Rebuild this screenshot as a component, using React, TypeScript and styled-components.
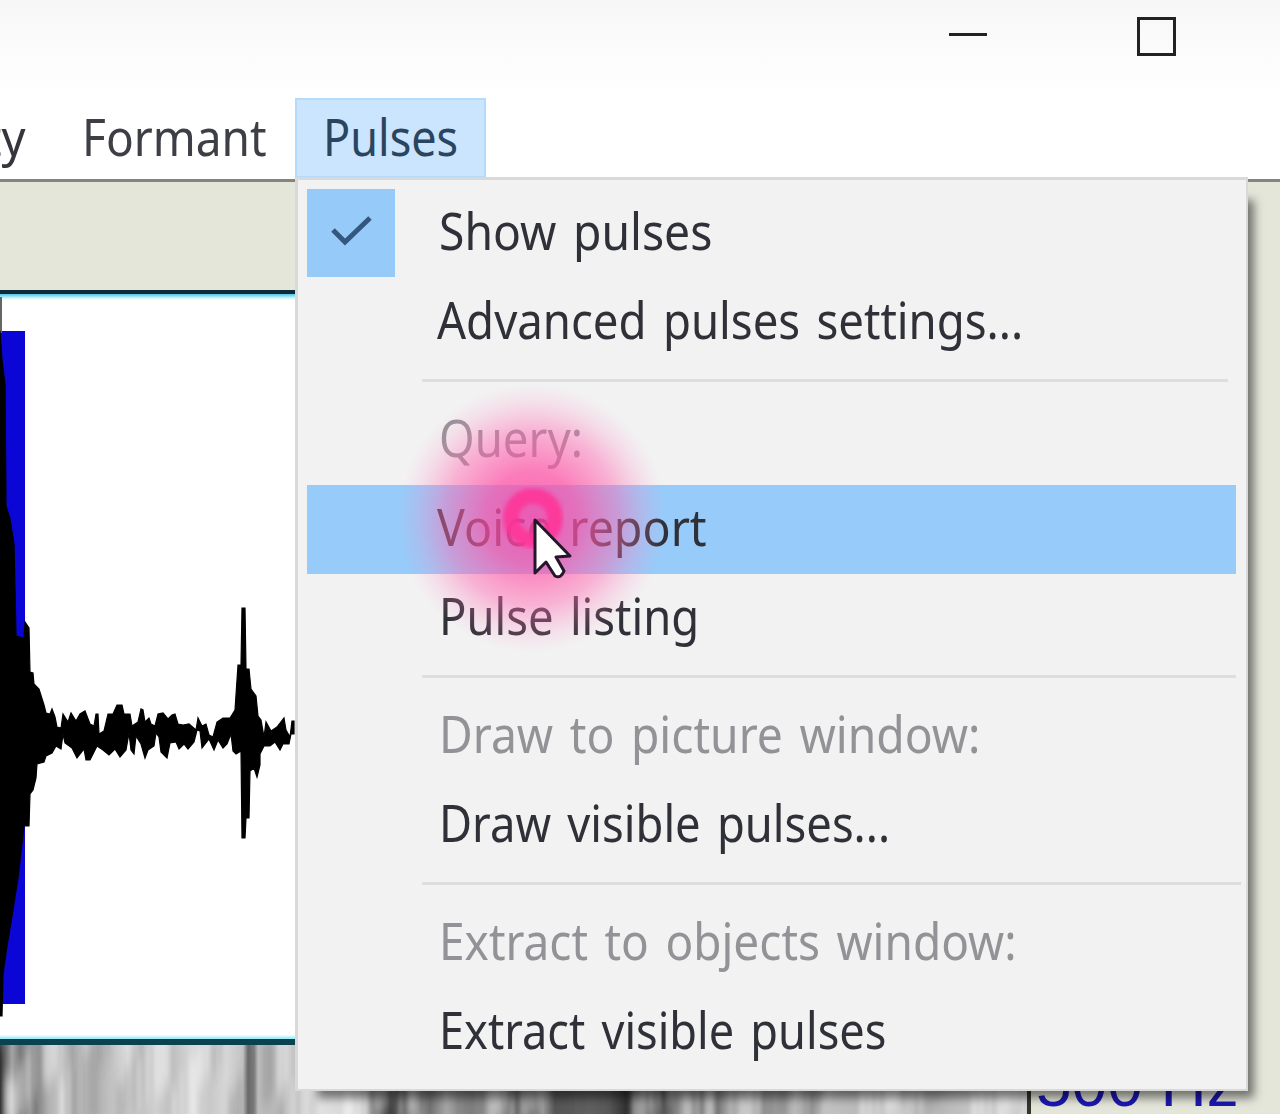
import React, { useLayoutEffect, useRef } from 'react';
import styled, { createGlobalStyle } from 'styled-components';

const GlobalStyle = createGlobalStyle`
  html,
  body {
    margin: 0;
    overflow: hidden;
  }
`;

const Window = styled.div`
  width: 1280px;
  height: 1114px;
  display: flex;
  flex-direction: column;
  overflow: hidden;
  background: #fff;
  font-family: 'Noto Sans', 'Open Sans', sans-serif;
  font-size: 51px;
  color: #34353d;
  cursor: default;
`;

const TitleBar = styled.div`
  flex: none;
  height: 98px;
  box-sizing: border-box;
  display: flex;
  justify-content: flex-end;
  gap: 149px;
  padding: 16px 103px 0 0;
  background: linear-gradient(#f7f7f7, #fcfcfc 60%, #fff);
`;

const MenuBar = styled.nav`
  flex: none;
  height: 81px;
  display: flex;
  border-bottom: 3px solid #858580;
`;

const MenuTitle = styled.div<{ $width: number; $pad: number; $open?: boolean }>`
  position: relative;
  box-sizing: border-box;
  width: ${(p) => p.$width}px;
  height: 80px;
  padding-left: ${(p) => p.$pad}px;
  line-height: 72px;
  border: 2px solid ${(p) => (p.$open ? '#b5dafa' : 'transparent')};
  background: ${(p) => (p.$open ? '#cae5fd' : 'transparent')};
  color: ${(p) => (p.$open ? '#2b4560' : '#3d3e46')};
`;

const Label = styled.span`
  display: inline-block;
  white-space: pre;
  word-spacing: 5px;
  transform-origin: 0 0;
`;

const Clipped = styled.div`
  width: 55px;
  height: 80px;
  box-sizing: border-box;
  padding-right: 29px;
  display: flex;
  justify-content: flex-end;
  overflow: hidden;
  line-height: 76px;

  ${Label} {
    transform-origin: 100% 0;
  }
`;

const Popup = styled.div`
  position: absolute;
  z-index: 2;
  top: 77px;
  left: -2px;
  width: 953px;
  height: 914px;
  box-sizing: border-box;
  padding: 9px 10px 0 9px;
  border: solid #d9d9d9;
  border-width: 3px 2px 2px 3px;
  background: #f2f2f2;
  box-shadow: 14px 15px 9px -8px rgba(0, 0, 0, 0.5);
`;

const Item = styled.div<{ $active?: boolean; $disabled?: boolean }>`
  height: 89px;
  display: flex;
  line-height: 83px;
  background: ${(p) => (p.$active ? '#97cbf9' : 'transparent')};
  color: ${(p) => (p.$disabled ? '#929297' : '#303138')};
`;

const Gutter = styled.div<{ $wide?: boolean }>`
  flex: none;
  width: ${(p) => (p.$wide ? 132 : 130)}px;
`;

const CheckBox = styled.div`
  width: 88px;
  height: 88px;
  background: #95caf9;
`;

const Separator = styled.hr<{ $end: number }>`
  height: 3px;
  margin: 12px ${(p) => p.$end}px 14px 115px;
  border: 0;
  background: #dedede;
`;

const Editor = styled.div`
  flex: 1;
  display: flex;
  background: #e5e6da;
`;

const Tracks = styled.div`
  width: 1027px;
  display: flex;
  flex-direction: column;
`;

const Ruler = styled.div`
  flex: none;
  height: 108px;
`;

const SoundPane = styled.div`
  flex: none;
  height: 755px;
  box-sizing: border-box;
  border-top: 4px solid #0d2b38;
  border-bottom: 6px solid #0b4252;
  background: linear-gradient(#55c4e2 0, #c8f6fd 4px, #fff 6px, #fff 741px, #9eeef8 744px);

  svg {
    display: block;
  }
`;

const SpectrumPane = styled.div`
  flex: 1;
  overflow: hidden;

  svg {
    display: block;
  }
`;

const Scale = styled.div`
  flex: 1;
  display: flex;
  flex-direction: column;
  justify-content: flex-end;
  overflow: hidden;
`;

const Frequency = styled.div`
  height: 78px;
  box-sizing: border-box;
  padding-left: 5px;
  border-left: 4px solid #35352c;
  font-family: 'Liberation Sans', Arial, sans-serif;
  font-size: 64px;
  line-height: 90px;
  white-space: nowrap;
  color: #1c18b4;
`;

const Highlight = styled.div`
  position: absolute;
  z-index: 3;
  left: 105px;
  top: 280px;
  width: 260px;
  height: 290px;
  pointer-events: none;
`;

// Text squeezed horizontally to the given width
const FitText: React.FC<{ width: number; children: string }> = ({ width, children }) => {
  const ref = useRef<HTMLSpanElement>(null);

  useLayoutEffect(() => {
    const el = ref.current;
    if (el) el.style.transform = `scaleX(${width / el.offsetWidth})`;
  }, [width, children]);

  return <Label ref={ref}>{children}</Label>;
};

type Entry =
  | { kind: 'item'; text: string; width: number; checked?: boolean; active?: boolean; disabled?: boolean }
  | { kind: 'separator'; end: number };

const entries: Entry[] = [
  { kind: 'item', text: 'Show pulses', width: 273, checked: true },
  { kind: 'item', text: 'Advanced pulses settings...', width: 586 },
  { kind: 'separator', end: 8 },
  { kind: 'item', text: 'Query:', width: 144, disabled: true },
  { kind: 'item', text: 'Voice report', width: 270, active: true },
  { kind: 'item', text: 'Pulse listing', width: 260 },
  { kind: 'separator', end: 0 },
  { kind: 'item', text: 'Draw to picture window:', width: 541, disabled: true },
  { kind: 'item', text: 'Draw visible pulses...', width: 451 },
  { kind: 'separator', end: -5 },
  { kind: 'item', text: 'Extract to objects window:', width: 578, disabled: true },
  { kind: 'item', text: 'Extract visible pulses', width: 447 },
];

const PulsesMenu: React.FC = () => (
  <Popup>
    {entries.map((entry, i) =>
      entry.kind === 'separator' ? (
        <Separator key={i} $end={entry.end} />
      ) : (
        <Item key={i} $active={entry.active} $disabled={entry.disabled}>
          <Gutter $wide={!/^[AV]/.test(entry.text)}>
            {entry.checked && (
              <CheckBox>
                <svg width="88" height="88" viewBox="0 0 88 88">
                  <path d="M26 41 L38 53 L63 29" fill="none" stroke="#34577f" strokeWidth="5" />
                </svg>
              </CheckBox>
            )}
          </Gutter>
          <FitText width={entry.width}>{entry.text}</FitText>
        </Item>
      ),
    )}
  </Popup>
);

const ClickMark: React.FC = () => (
  <Highlight>
    <svg width="260" height="290" viewBox="0 0 260 290">
      <defs>
        <radialGradient id="glow">
          <stop offset="0" stopColor="#ff3fa4" stopOpacity="0.8" />
          <stop offset="0.35" stopColor="#ff4fa5" stopOpacity="0.72" />
          <stop offset="0.65" stopColor="#ff66b0" stopOpacity="0.46" />
          <stop offset="0.85" stopColor="#ff80be" stopOpacity="0.18" />
          <stop offset="1" stopColor="#ff90c6" stopOpacity="0" />
        </radialGradient>
        <filter id="soft" x="-20%" y="-20%" width="140%" height="140%">
          <feGaussianBlur stdDeviation="2" />
        </filter>
      </defs>
      <circle cx="130" cy="138" r="134" fill="url(#glow)" />
      <circle cx="131" cy="138" r="22" fill="none" stroke="#ff3297" strokeOpacity="0.85" strokeWidth="16" filter="url(#soft)" />
      <path
        d="M133 140 L133 193 L144 182 L153 196 Q159 199 162 191 L154 177 L168 176 Z"
        fill="#fff"
        stroke="#25162c"
        strokeWidth="3"
        strokeLinejoin="round"
      />
    </svg>
  </Highlight>
);

// Upper and lower envelopes of the sound
const upper =
  '0,37 2,66 5,90 6,212 10,225 14,250 16,342 24,344 25,328 29,334 30,378 33,379 34,390 39,395 44,411 46,419 50,420 52,415 55,423 57,433 61,434 63,420 68,428 71,419 76,427 80,420 85,417 90,430 94,432 96,420 98,420 99,440 104,437 108,420 113,420 117,411 122,411 124,420 130,420 132,432 138,428 141,415 143,416 145,428 149,424 151,430 155,432 158,420 163,419 168,425 172,421 175,420 178,430 183,431 189,430 196,436 198,424 202,432 206,430 209,441 213,443 217,428 223,424 230,424 235,416 238,371 241,371 242,314 245,314 246,375 249,375 251,395 256,402 258,422 261,426 264,443 266,428 271,437 277,433 284,424 286,436 290,443 292,427 294,427';
const lower =
  '294,440 291,440 289,450 283,450 280,456 275,448 270,452 264,452 260,460 260,471 257,483 254,474 250,477 249,524 246,524 245,544 242,544 241,457 236,460 233,457 231,440 227,450 223,454 218,446 214,456 209,445 202,454 200,437 197,436 194,448 188,455 184,450 179,455 176,448 170,449 167,464 161,458 159,443 156,439 154,452 148,456 145,464 141,450 136,442 134,460 131,456 129,439 126,456 120,463 115,455 109,461 103,456 97,452 93,460 90,466 86,466 84,455 77,464 72,454 65,449 63,440 61,455 56,452 52,459 46,462 44,468 37,470 36,484 33,496 30,500 29,532 24,532 18,584 12,622 7,652 3,680 2,722 0,722';

const Waveform: React.FC = () => (
  <svg width="1027" height="745" viewBox="0 0 1027 745">
    <rect x="-4" y="37" width="29" height="673" fill="#0b06d6" />
    <rect x="0" y="3" width="2" height="36" fill="#666" />
    <polygon points={`${upper} ${lower}`} fill="#000" stroke="#000" strokeWidth="1.2" />
  </svg>
);

// Grey levels of the spectrum, [x, level]
const levels: [number, number][] = [
  [0, 45], [6, 110], [12, 165], [20, 120], [30, 150], [36, 125], [48, 175], [62, 200], [72, 165], [86, 200],
  [98, 178], [112, 195], [128, 220], [140, 188], [155, 208], [172, 190], [192, 215], [210, 200], [226, 215], [243, 195],
  [248, 105], [254, 125], [258, 190], [276, 185], [290, 200], [304, 190], [320, 225], [350, 215], [365, 200], [375, 110],
  [390, 60], [405, 110], [418, 150], [430, 115], [446, 165], [470, 130], [500, 150], [520, 90], [530, 85], [543, 150],
  [555, 85], [590, 95], [610, 85], [626, 50], [640, 85], [655, 110], [664, 85], [680, 145], [702, 125], [712, 145],
  [718, 120], [730, 175], [758, 150], [785, 155], [796, 200], [812, 150], [824, 195], [860, 185], [900, 205], [940, 185],
  [980, 200], [1027, 205],
];

const streaks = Array.from({ length: 130 }, (_, i) => ({
  x: (i * 137.5) % 1027,
  y: ((i * 53) % 90) - 40,
  w: 3 + (i % 4) * 2,
  h: 40 + ((i * 17) % 50),
  light: i % 5 < 3,
}));

const Spectrum: React.FC = () => (
  <svg width="1027" height="72" viewBox="0 0 1027 72">
    <defs>
      <linearGradient id="levels">
        {levels.map(([x, v]) => (
          <stop key={x} offset={x / 1027} stopColor={`rgb(${v},${v},${v})`} />
        ))}
      </linearGradient>
      <filter id="smear" x="-5%" y="-20%" width="110%" height="140%">
        <feGaussianBlur stdDeviation="2 9" />
      </filter>
    </defs>
    <rect width="1027" height="72" fill="url(#levels)" />
    <g filter="url(#smear)">
      {streaks.map((s, i) => (
        <rect key={i} x={s.x} y={s.y} width={s.w} height={s.h} fill={s.light ? '#fff' : '#666'} opacity={s.light ? 0.4 : 0.22} />
      ))}
    </g>
  </svg>
);

const App: React.FC = () => (
  <>
    <GlobalStyle />
    <Window>
      <TitleBar>
        <svg width="40" height="40" viewBox="0 0 40 40">
          <path d="M1 18.5 H39" stroke="#222" strokeWidth="3" />
        </svg>
        <svg width="40" height="40" viewBox="0 0 40 40">
          <rect x="1.5" y="2.5" width="36" height="36" fill="none" stroke="#222" strokeWidth="3" />
        </svg>
      </TitleBar>
      <MenuBar>
        <Clipped>
          <FitText width={194}>Intensity</FitText>
        </Clipped>
        <MenuTitle $width={240} $pad={25}>
          <FitText width={185}>Formant</FitText>
        </MenuTitle>
        <MenuTitle $width={191} $pad={26} $open>
          <FitText width={135}>Pulses</FitText>
          <PulsesMenu />
          <ClickMark />
        </MenuTitle>
      </MenuBar>
      <Editor>
        <Tracks>
          <Ruler />
          <SoundPane>
            <Waveform />
          </SoundPane>
          <SpectrumPane>
            <Spectrum />
          </SpectrumPane>
        </Tracks>
        <Scale>
          <Frequency>500 Hz</Frequency>
        </Scale>
      </Editor>
    </Window>
  </>
);

export default App;
